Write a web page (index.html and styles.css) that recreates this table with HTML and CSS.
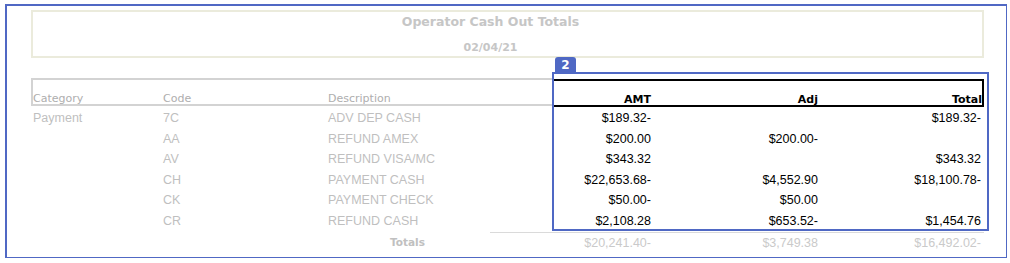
FILE: index.html
```html
<!DOCTYPE html>
<html>
<head>
<meta charset="utf-8">
<link rel="stylesheet" href="styles.css">
</head>
<body>
<div class="frame">
  <div class="title-box">
    <div class="title">Operator Cash Out Totals</div>
    <div class="date">02/04/21</div>
  </div>

  <div class="report">
    <div class="grid head">
      <div class="h h-dim h-first">Category</div>
      <div class="h h-dim">Code</div>
      <div class="h h-dim">Description</div>
      <div class="h h-on num">AMT</div>
      <div class="h h-on num p-adj">Adj</div>
      <div class="h h-on num h-last">Total</div>
    </div>

    <div class="rows">
      <div class="grid row">
        <div class="c dim first">Payment</div><div class="c dim">7C</div><div class="c dim">ADV DEP CASH</div>
        <div class="c on num">$189.32-</div><div class="c on num p-adj"></div><div class="c on num p-tot">$189.32-</div>
      </div>
      <div class="grid row">
        <div class="c dim first"></div><div class="c dim">AA</div><div class="c dim">REFUND AMEX</div>
        <div class="c on num">$200.00</div><div class="c on num p-adj">$200.00-</div><div class="c on num p-tot"></div>
      </div>
      <div class="grid row">
        <div class="c dim first"></div><div class="c dim">AV</div><div class="c dim">REFUND VISA/MC</div>
        <div class="c on num">$343.32</div><div class="c on num p-adj"></div><div class="c on num p-tot">$343.32</div>
      </div>
      <div class="grid row">
        <div class="c dim first"></div><div class="c dim">CH</div><div class="c dim">PAYMENT CASH</div>
        <div class="c on num">$22,653.68-</div><div class="c on num p-adj">$4,552.90</div><div class="c on num p-tot">$18,100.78-</div>
      </div>
      <div class="grid row">
        <div class="c dim first"></div><div class="c dim">CK</div><div class="c dim">PAYMENT CHECK</div>
        <div class="c on num">$50.00-</div><div class="c on num p-adj">$50.00</div><div class="c on num p-tot"></div>
      </div>
      <div class="grid row">
        <div class="c dim first"></div><div class="c dim">CR</div><div class="c dim">REFUND CASH</div>
        <div class="c on num">$2,108.28</div><div class="c on num p-adj">$653.52-</div><div class="c on num p-tot">$1,454.76</div>
      </div>
    </div>

    <div class="totals">
      <div class="t-label">Totals</div>
      <div class="t-values">
        <div class="t-val t-amt">$20,241.40-</div>
        <div class="t-val t-adj">$3,749.38</div>
        <div class="t-val t-tot">$16,492.02-</div>
      </div>
    </div>
  </div>

  <div class="highlight"></div>
  <div class="badge">2</div>
</div>
</body>
</html>
```

FILE: styles.css
```css
html, body {
  margin: 0;
  padding: 0;
  background: #ffffff;
}

body {
  font-family: "Liberation Sans", Arial, sans-serif;
}

.frame {
  position: relative;
  box-sizing: border-box;
  width: 1002px;
  height: 254px;
  margin: 4px 0 0 5px;
  border: 2px solid #5068c4;
  border-right-width: 1px;
  border-bottom-width: 1px;
}

.title-box {
  box-sizing: border-box;
  width: 953px;
  height: 48px;
  margin: 4px 0 0 24px;
  border: 2px solid #ebebdc;
  padding-right: 34px;
  text-align: center;
  font-family: "DejaVu Sans", Verdana, sans-serif;
  font-weight: bold;
  color: #c6c6c6;
}

.title {
  font-size: 12.5px;
  line-height: 20px;
}

.date {
  font-size: 11px;
  line-height: 16px;
  margin-top: 8px;
}

.report {
  width: 953px;
  margin: 20px 0 0 24px;
}

.grid {
  display: grid;
  grid-template-columns: 132px 165px 224px 103px 167px 162px;
}

.head {
  height: 28px;
}

.h {
  box-sizing: border-box;
  display: flex;
  align-items: flex-end;
  font-family: "DejaVu Sans", Verdana, sans-serif;
  font-size: 11px;
  line-height: 10px;
  padding-bottom: 0;
}

.h-dim {
  color: #aeaeae;
  border-top: 2px solid #d3d3d3;
  border-bottom: 2px solid #d3d3d3;
}

.h-first {
  border-left: 2px solid #d3d3d3;
}

.h-on {
  color: #000000;
  font-weight: bold;
  border-top: 2px solid #000000;
  border-bottom: 2px solid #000000;
  margin-top: 1px;
  margin-bottom: -1px;
}

.h.num {
  justify-content: flex-end;
  padding-right: 4px;
}

.h.h-last {
  border-right: 2px solid #000000;
  padding-right: 0;
}

.rows {
  padding-top: 2px;
}

.row {
  height: 20.5px;
}

.c {
  font-size: 12.5px;
  line-height: 20.5px;
  white-space: nowrap;
}

.c.first {
  padding-left: 2px;
}

.dim {
  color: #bfbfbf;
}

.on {
  color: #000000;
}

.c.num {
  text-align: right;
  padding-right: 4px;
}

.c.p-tot {
  padding-right: 3px;
}

.totals {
  display: flex;
  height: 21px;
  margin-top: 1px;
}

.t-label {
  width: 100px;
  margin-left: 359px;
  font-family: "DejaVu Sans", Verdana, sans-serif;
  font-weight: bold;
  font-size: 10.5px;
  line-height: 21px;
  color: #c0c0c0;
}

.t-values {
  display: flex;
  border-top: 1px solid #dadada;
}

.t-val {
  font-size: 12.5px;
  line-height: 20px;
  color: #cacaca;
  text-align: right;
  white-space: nowrap;
}

.t-amt {
  width: 161px;
  padding-right: 4px;
}

.t-adj {
  width: 163px;
  padding-right: 4px;
}

.t-tot {
  width: 159px;
  padding-right: 3px;
}

.highlight {
  position: absolute;
  left: 545px;
  top: 66px;
  width: 437px;
  height: 159px;
  box-sizing: border-box;
  border: 2px solid #4f68c4;
}

.badge {
  position: absolute;
  left: 548px;
  top: 51px;
  width: 21px;
  height: 15px;
  background: #4f68c4;
  border-radius: 3px 3px 0 0;
  color: #ffffff;
  font-family: "DejaVu Sans", Verdana, sans-serif;
  font-weight: bold;
  font-size: 12px;
  line-height: 16px;
  text-align: center;
}
```
